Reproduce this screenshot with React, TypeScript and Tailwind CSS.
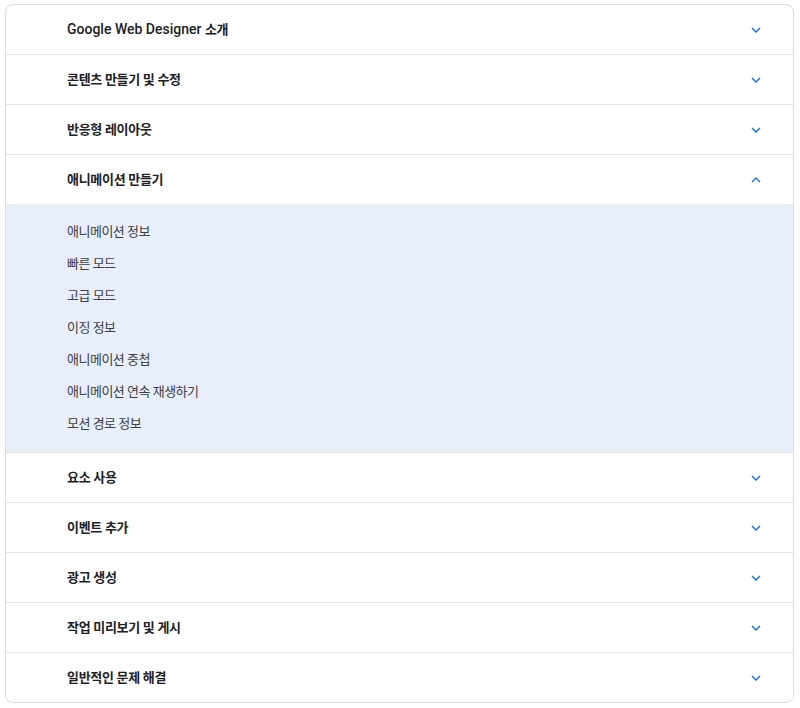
import { useState } from 'react';

const sections: { title: string; items?: string[] }[] = [
  { title: 'Google Web Designer 소개' },
  { title: '콘텐츠 만들기 및 수정' },
  { title: '반응형 레이아웃' },
  {
    title: '애니메이션 만들기',
    items: [
      '애니메이션 정보',
      '빠른 모드',
      '고급 모드',
      '이징 정보',
      '애니메이션 중첩',
      '애니메이션 연속 재생하기',
      '모션 경로 정보',
    ],
  },
  { title: '요소 사용' },
  { title: '이벤트 추가' },
  { title: '광고 생성' },
  { title: '작업 미리보기 및 게시' },
  { title: '일반적인 문제 해결' },
];

// hangul runs are set a touch smaller than the latin part of a title
function Title({ text }: { text: string }) {
  const parts = text.split(/([\uac00-\ud7a3][\uac00-\ud7a3\s]*)/).filter(Boolean);
  return (
    <span className="text-[14px] font-medium text-[#202124]">
      {parts.map((p, i) =>
        /[\uac00-\ud7a3]/.test(p) ? (
          <span key={i} className="text-[13px] font-semibold tracking-[-0.3px]">
            {p}
          </span>
        ) : (
          <span key={i}>{p}</span>
        )
      )}
    </span>
  );
}

function Chevron({ open }: { open: boolean }) {
  return (
    <svg
      viewBox="0 0 24 24"
      className={`w-[18px] h-[18px] fill-[#1a73e8] ${open ? 'rotate-180' : ''}`}
    >
      <path d="M16.59 8.59 12 13.17 7.41 8.59 6 10l6 6 6-6z" />
    </svg>
  );
}

export default function App() {
  const [open, setOpen] = useState(3);

  return (
    <div className="pt-[4px] pl-[5px] pr-[6px] bg-white font-['Roboto','Noto_Sans_CJK_KR',sans-serif]">
      <div className="border border-[#dadce0] rounded-[8px] overflow-hidden">
        {sections.map((s, i) => {
          const isOpen = open === i;
          const last = i === sections.length - 1;
          return (
            <div key={s.title} className={last ? '' : 'border-b border-[#e3e3e3]'}>
              <button
                onClick={() => setOpen(isOpen ? -1 : i)}
                className="w-full h-[49px] flex items-center justify-between pl-[61px] pr-[28px] text-left"
              >
                <Title text={s.title} />
                <Chevron open={isOpen} />
              </button>
              {isOpen && s.items && (
                <div className="bg-[#e8eefa] pt-[12px] pb-[12px] pl-[61px]">
                  {s.items.map((it) => (
                    <div
                      key={it}
                      className="h-[32px] flex items-center text-[13px] tracking-[-0.5px] text-[#3c4043]"
                    >
                      {it}
                    </div>
                  ))}
                </div>
              )}
            </div>
          );
        })}
      </div>
    </div>
  );
}
